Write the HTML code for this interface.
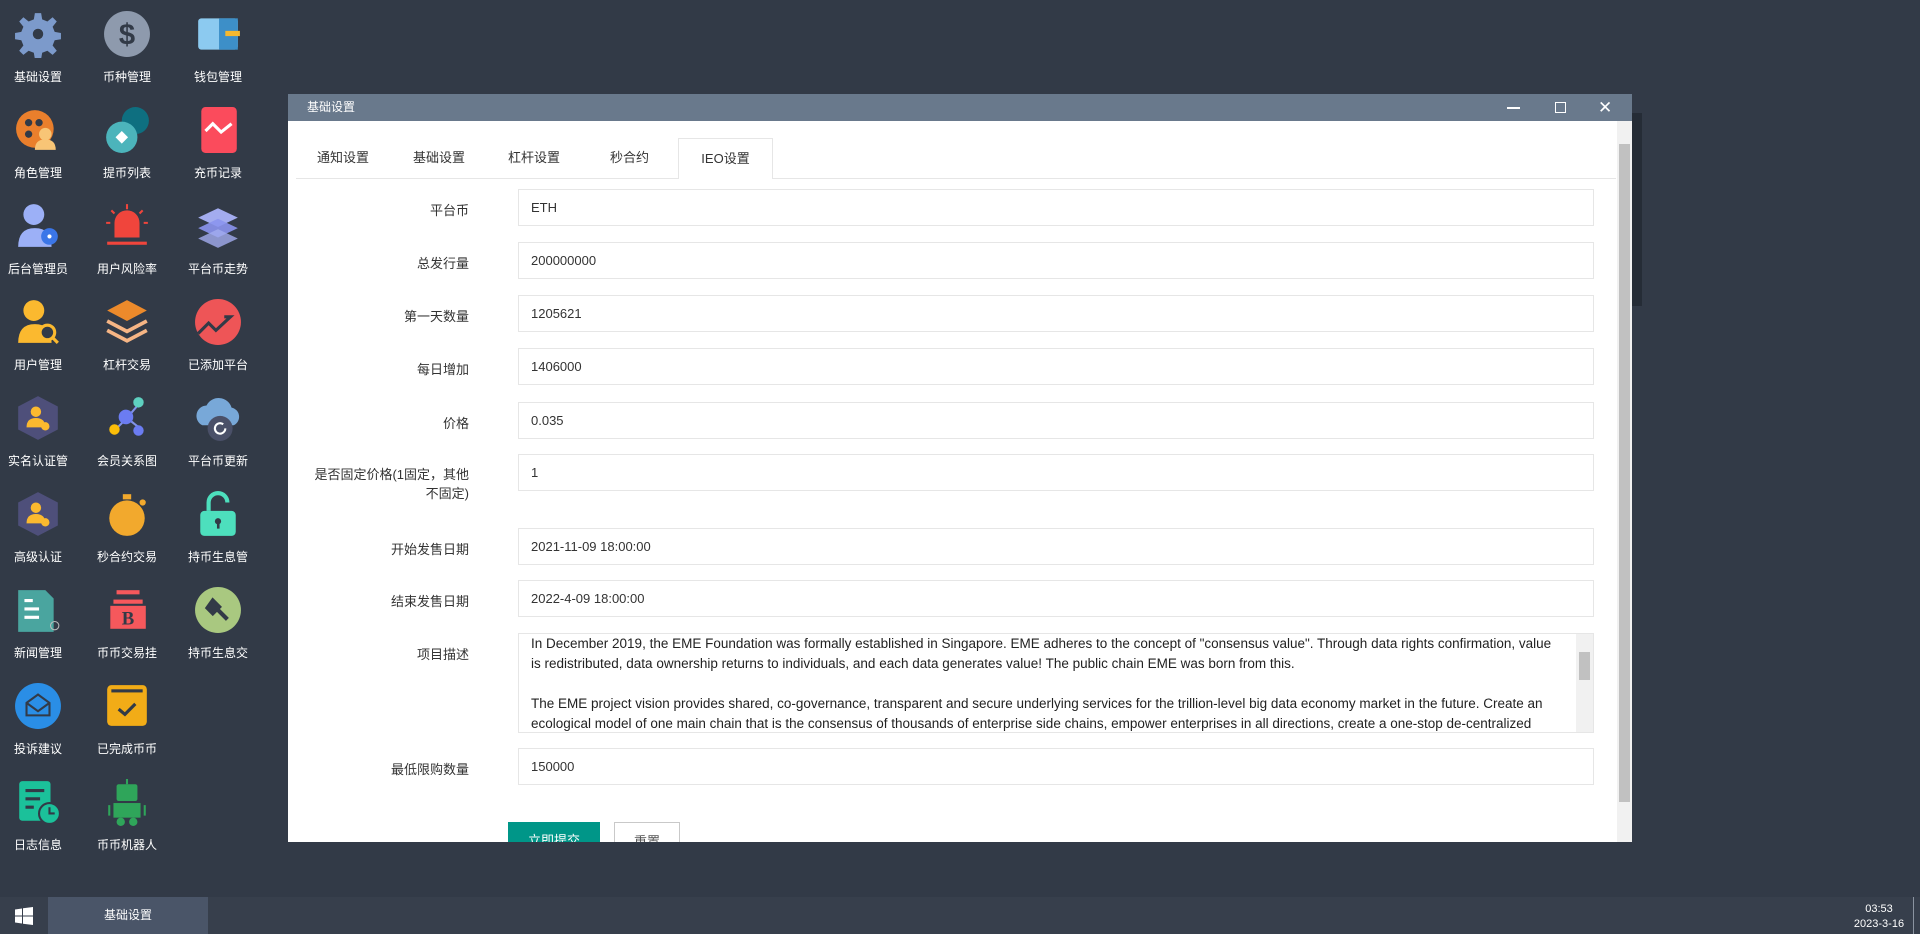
<!DOCTYPE html>
<html><head><meta charset="utf-8"><style>
*{box-sizing:border-box;margin:0;padding:0}
body{width:1920px;height:934px;background:#323a47;font-family:"Liberation Sans","Noto Sans CJK SC",sans-serif;position:relative;overflow:hidden}
.ic{position:absolute;width:90px;text-align:center;color:#fff;font-size:12px}
.ic svg{display:block;margin:0 auto;width:48px;height:48px}
.ic span{display:block;margin-top:10px;white-space:nowrap}
.win{position:absolute;left:288px;top:94px;width:1344px;height:748px;background:#fff;overflow:hidden}
.tb{height:34px;background:#69798c;color:#fff;font-size:12px;line-height:34px;padding-left:19px;position:relative}
.lab{position:absolute;right:1163px;font-size:13px;color:#333;text-align:right;width:200px}
.inp{position:absolute;left:230px;width:1076px;height:37px;border:1px solid #e6e6e6;font-size:13px;color:#333;padding-left:12px;line-height:35px}
.tab{position:absolute;top:44px;font-size:13px;color:#333;line-height:40px}
</style></head><body>

<div class="ic" style="left:-7px;top:10px"><svg viewBox="0 0 46 46"><path fill="#7c9acb" d="M20 3h6l1 6 5 2 5-4 4 4-4 5 2 5 6 1v6l-6 1-2 5 4 5-4 4-5-4-5 2-1 6h-6l-1-6-5-2-5 4-4-4 4-5-2-5-6-1v-6l6-1 2-5-4-5 4-4 5 4 5-2z"/><circle cx="23" cy="23" r="5" fill="#323a47"/></svg><span>基础设置</span></div>
<div class="ic" style="left:82px;top:10px"><svg viewBox="0 0 46 46"><circle cx="23" cy="23" r="22" fill="#8e9aad"/><text x="23" y="33" font-size="28" font-weight="bold" text-anchor="middle" fill="#323a47" font-family="Liberation Sans">$</text></svg><span>币种管理</span></div>
<div class="ic" style="left:173px;top:10px"><svg viewBox="0 0 46 46"><rect x="4" y="8" width="38" height="30" rx="3" fill="#8ccaf0"/><rect x="24" y="8" width="18" height="30" fill="#3d8fc8"/><rect x="30" y="20" width="14" height="5" fill="#f5b82e"/></svg><span>钱包管理</span></div>

<div class="ic" style="left:-7px;top:106px"><svg viewBox="0 0 46 46"><circle cx="20" cy="22" r="18" fill="#ea7f2c"/><circle cx="14" cy="16" r="3.5" fill="#323a47"/><circle cx="24" cy="16" r="3.5" fill="#323a47"/><circle cx="14" cy="27" r="3.5" fill="#323a47"/><circle cx="30" cy="27" r="6" fill="#f8c576"/><path d="M20 42q0-10 10-10t10 10z" fill="#f8c576"/></svg><span>角色管理</span></div>
<div class="ic" style="left:82px;top:106px"><svg viewBox="0 0 46 46"><circle cx="31" cy="14" r="13" fill="#0e6f80"/><circle cx="18" cy="30" r="15" fill="#4cb4bb"/><path d="M18 24l6 6-6 6-6-6z" fill="#fff"/></svg><span>提币列表</span></div>
<div class="ic" style="left:173px;top:106px"><svg viewBox="0 0 46 46"><rect x="7" y="1" width="34" height="44" rx="4" fill="#fb4b5c"/><path d="M11 24l7-7 8 8 10-8" stroke="#fff" stroke-width="3" fill="none"/></svg><span>充币记录</span></div>

<div class="ic" style="left:-7px;top:202px"><svg viewBox="0 0 46 46"><circle cx="19" cy="12" r="10" fill="#9cb0f7"/><path d="M4 43q0-18 16-18t16 18z" fill="#9cb0f7"/><circle cx="34" cy="33" r="8" fill="#3b76e8"/><circle cx="34" cy="33" r="2" fill="#fff"/></svg><span>后台管理员</span></div>
<div class="ic" style="left:82px;top:202px"><svg viewBox="0 0 46 46"><path d="M11 34v-14a12 12 0 0 1 24 0v14z" fill="#f0453c"/><rect x="4" y="38" width="38" height="3" fill="#f0453c"/><path d="M23 2v5M8 8l3 3M38 8l-3 3M3 20h4M39 20h4" stroke="#f0453c" stroke-width="2"/></svg><span>用户风险率</span></div>
<div class="ic" style="left:173px;top:202px"><svg viewBox="0 0 46 46"><path d="M23 6l19 9-19 9-19-9z" fill="#a3acef"/><path d="M23 16l19 9-19 9-19-9z" fill="#8b95ee" opacity=".9"/><path d="M23 26l19 9-19 9-19-9z" fill="#a3acef" opacity=".8"/></svg><span>平台币走势</span></div>

<div class="ic" style="left:-7px;top:298px"><svg viewBox="0 0 46 46"><circle cx="19" cy="12" r="10" fill="#fbb92f"/><path d="M4 43q0-18 16-18t16 18z" fill="#fbb92f"/><circle cx="32" cy="33" r="7" fill="#323a47" stroke="#fbb92f" stroke-width="3"/><path d="M37 38l5 5" stroke="#fbb92f" stroke-width="3"/></svg><span>用户管理</span></div>
<div class="ic" style="left:82px;top:298px"><svg viewBox="0 0 46 46"><path d="M23 2l19 10-19 10-19-10z" fill="#ec8a2b"/><path d="M4 22l19 10 19-10M4 31l19 10 19-10" stroke="#f6b585" stroke-width="3.5" fill="none"/></svg><span>杠杆交易</span></div>
<div class="ic" style="left:173px;top:298px"><svg viewBox="0 0 46 46"><circle cx="23" cy="23" r="22" fill="#ee5557"/><path d="M4 34l10-10 7 7 14-13h-6" stroke="#323a47" stroke-width="3" fill="none"/></svg><span>已添加平台</span></div>

<div class="ic" style="left:-7px;top:394px"><svg viewBox="0 0 46 46"><path d="M23 2l19 10v22l-19 10-19-10v-22z" fill="#4e4f7a"/><circle cx="21" cy="17" r="5" fill="#fbb92f"/><path d="M12 32q0-9 9-9t9 9z" fill="#fbb92f"/><circle cx="30" cy="31" r="4" fill="#fbb92f"/></svg><span>实名认证管</span></div>
<div class="ic" style="left:82px;top:394px"><svg viewBox="0 0 46 46"><path d="M23 23l11-13M23 23l-10 10M23 23l10 8" stroke="#8192e8" stroke-width="2"/><circle cx="34" cy="8" r="5" fill="#5ed0c0"/><circle cx="22" cy="22" r="7" fill="#6b7cf2"/><circle cx="11" cy="34" r="5" fill="#fbbd08"/><circle cx="34" cy="35" r="5" fill="#6b7cf2"/></svg><span>会员关系图</span></div>
<div class="ic" style="left:173px;top:394px"><svg viewBox="0 0 46 46"><path d="M8 30a10 10 0 0 1 4-19 13 13 0 0 1 24 2 9 9 0 0 1 2 17z" fill="#78a8d8"/><circle cx="25" cy="33" r="12" fill="#4a5068"/><path d="M30 33a5 5 0 1 1-2-4" stroke="#fff" stroke-width="2" fill="none"/></svg><span>平台币更新</span></div>

<div class="ic" style="left:-7px;top:490px"><svg viewBox="0 0 46 46"><path d="M23 2l19 10v22l-19 10-19-10v-22z" fill="#4e4f7a"/><circle cx="21" cy="17" r="5" fill="#fbb92f"/><path d="M12 32q0-9 9-9t9 9z" fill="#fbb92f"/><circle cx="30" cy="31" r="4" fill="#fbb92f"/></svg><span>高级认证</span></div>
<div class="ic" style="left:82px;top:490px"><svg viewBox="0 0 46 46"><circle cx="23" cy="27" r="17" fill="#f2a92d"/><rect x="19" y="4" width="8" height="5" fill="#f2a92d"/><circle cx="38" cy="12" r="3" fill="#f2a92d"/></svg><span>秒合约交易</span></div>
<div class="ic" style="left:173px;top:490px"><svg viewBox="0 0 46 46"><path d="M14 20v-8a9 9 0 0 1 18 0" stroke="#4ddfbd" stroke-width="4" fill="none"/><rect x="6" y="20" width="34" height="24" rx="4" fill="#4ddfbd"/><circle cx="23" cy="30" r="3" fill="#323a47"/><rect x="22" y="30" width="2.5" height="7" fill="#323a47"/></svg><span>持币生息管</span></div>

<div class="ic" style="left:-7px;top:586px"><svg viewBox="0 0 46 46"><path d="M4 4h26l8 8v32h-34z" fill="#4aa59f"/><path d="M10 14h8M10 22h14M10 30h14" stroke="#fff" stroke-width="3"/><circle cx="39" cy="38" r="4" fill="none" stroke="#bbb"/></svg><span>新闻管理</span></div>
<div class="ic" style="left:82px;top:586px"><svg viewBox="0 0 46 46"><rect x="13" y="4" width="22" height="4" fill="#f6585c"/><rect x="10" y="13" width="28" height="4" fill="#f6585c"/><rect x="7" y="19" width="34" height="22" fill="#f6585c"/><text x="24" y="37" text-anchor="middle" font-size="18" font-weight="bold" fill="#323a47" font-family="Liberation Serif">B</text></svg><span>币币交易挂</span></div>
<div class="ic" style="left:173px;top:586px"><svg viewBox="0 0 46 46"><circle cx="23" cy="23" r="22" fill="#a9c880"/><path d="M18 14l6 6-6 6-5-5z M22 22l10 10" stroke="#323a47" stroke-width="4" fill="#323a47"/></svg><span>持币生息交</span></div>

<div class="ic" style="left:-7px;top:682px"><svg viewBox="0 0 46 46"><circle cx="23" cy="23" r="22" fill="#2a8ee6"/><path d="M12 20l11-8 11 8v12h-22z M12 20l11 8 11-8" stroke="#323a47" stroke-width="2" fill="none"/></svg><span>投诉建议</span></div>
<div class="ic" style="left:82px;top:682px"><svg viewBox="0 0 46 46"><rect x="4" y="3" width="38" height="39" rx="4" fill="#f2ac17"/><rect x="8" y="7" width="30" height="3" fill="#323a47"/><path d="M15 26l6 5 10-10" stroke="#323a47" stroke-width="3" fill="none"/></svg><span>已完成币币</span></div>

<div class="ic" style="left:-7px;top:778px"><svg viewBox="0 0 46 46"><rect x="5" y="3" width="30" height="38" rx="3" fill="#1bc19a"/><path d="M11 12h18M11 20h14M11 28h8" stroke="#323a47" stroke-width="3"/><circle cx="34" cy="34" r="10" fill="#1bc19a" stroke="#323a47" stroke-width="2"/><path d="M34 28v6h5" stroke="#323a47" stroke-width="2" fill="none"/></svg><span>日志信息</span></div>
<div class="ic" style="left:82px;top:778px"><svg viewBox="0 0 46 46"><rect x="13" y="6" width="20" height="16" rx="2" fill="#2fa55a"/><rect x="10" y="24" width="26" height="14" fill="#2fa55a"/><circle cx="17" cy="42" r="4" fill="#2fa55a"/><circle cx="29" cy="42" r="4" fill="#2fa55a"/><path d="M23 1v5M6 26v10M40 26v10" stroke="#2fa55a" stroke-width="2"/></svg><span>币币机器人</span></div>

<div style="position:absolute;left:1632px;top:113px;width:10px;height:193px;background:#252c36"></div>

<div class="win">
 <div class="tb" style="height:27px;line-height:27px">基础设置
  <div style="position:absolute;left:1219px;top:13px;width:13px;height:1.5px;background:#fff"></div>
  <div style="position:absolute;left:1267px;top:8px;width:11px;height:11px;border:1px solid #fff"></div>
  <div style="position:absolute;left:1310px;top:0;color:#fff;font-size:17px;line-height:27px">✕</div>
 </div>
 <div style="position:absolute;left:8px;top:84px;width:1320px;height:1px;background:#e6e6e6"></div>
 <div class="tab" style="left:29px">通知设置</div>
 <div class="tab" style="left:125px">基础设置</div>
 <div class="tab" style="left:220px">杠杆设置</div>
 <div class="tab" style="left:322px">秒合约</div>
 <div class="tab" style="left:390px;width:95px;height:41px;background:#fff;border:1px solid #e6e6e6;border-bottom:none;text-align:center">IEO设置</div>

 <div class="lab" style="top:106px">平台币</div><div class="inp" style="top:95px">ETH</div>
 <div class="lab" style="top:159px">总发行量</div><div class="inp" style="top:148px">200000000</div>
 <div class="lab" style="top:212px">第一天数量</div><div class="inp" style="top:201px">1205621</div>
 <div class="lab" style="top:265px">每日增加</div><div class="inp" style="top:254px">1406000</div>
 <div class="lab" style="top:319px">价格</div><div class="inp" style="top:308px">0.035</div>
 <div class="lab" style="top:371px;line-height:19px">是否固定价格(1固定，其他<br>不固定)</div><div class="inp" style="top:360px">1</div>
 <div class="lab" style="top:445px">开始发售日期</div><div class="inp" style="top:434px">2021-11-09 18:00:00</div>
 <div class="lab" style="top:497px">结束发售日期</div><div class="inp" style="top:486px">2022-4-09 18:00:00</div>
 <div class="lab" style="top:550px">项目描述</div>
 <div class="inp" style="top:539px;height:100px;overflow:hidden;line-height:20px;padding:0 30px 0 12px;font-size:13.5px;color:#222">In December 2019, the EME Foundation was formally established in Singapore. EME adheres to the concept of "consensus value". Through data rights confirmation, value is redistributed, data ownership returns to individuals, and each data generates value! The public chain EME was born from this.<br><br>The EME project vision provides shared, co-governance, transparent and secure underlying services for the trillion-level big data economy market in the future. Create an ecological model of one main chain that is the consensus of thousands of enterprise side chains, empower enterprises in all directions, create a one-stop de-centralized service-type public chain, and solve the pain points of cumbersome enterprise blockchain operation and circulation. For details, please refer to the EME
  <div style="position:absolute;right:0;top:0;width:17px;height:98px;background:#f1f1f1"><div style="margin:18px 3px 0;height:28px;background:#c1c1c1"></div></div>
 </div>
 <div class="lab" style="top:665px">最低限购数量</div><div class="inp" style="top:654px">150000</div>

 <div style="position:absolute;left:220px;top:728px;width:92px;height:38px;background:#009688;color:#fff;font-size:13px;text-align:center;line-height:38px">立即提交</div>
 <div style="position:absolute;left:326px;top:728px;width:66px;height:38px;border:1px solid #c9c9c9;color:#555;font-size:13px;text-align:center;line-height:38px">重置</div>

 <div style="position:absolute;left:1329px;top:27px;width:15px;height:721px;background:#f1f1f1"><div style="margin:23px 2px 0;height:658px;background:#c1c1c1"></div></div>
</div>

<div style="position:absolute;left:0;top:897px;width:1920px;height:37px;background:#373f4c"></div>
<svg style="position:absolute;left:15px;top:907px" width="18" height="18" viewBox="0 0 18 18"><path d="M0 2.5l7-1v7h-7zM8 1.3l10-1.3v8.5h-10zM0 9.5h7v7l-7-1zM8 9.5h10v8.5l-10-1.3z" fill="#fff"/></svg>
<div style="position:absolute;left:48px;top:897px;width:160px;height:37px;background:#4a5568;color:#fff;font-size:12px;text-align:center;line-height:37px">基础设置</div>
<div style="position:absolute;left:1848px;top:902px;width:62px;color:#fff;font-size:11px;text-align:center;line-height:15px">03:53<br>2023-3-16</div>
<div style="position:absolute;left:1913px;top:897px;width:1px;height:37px;background:#8a93a0"></div>
</body></html>
